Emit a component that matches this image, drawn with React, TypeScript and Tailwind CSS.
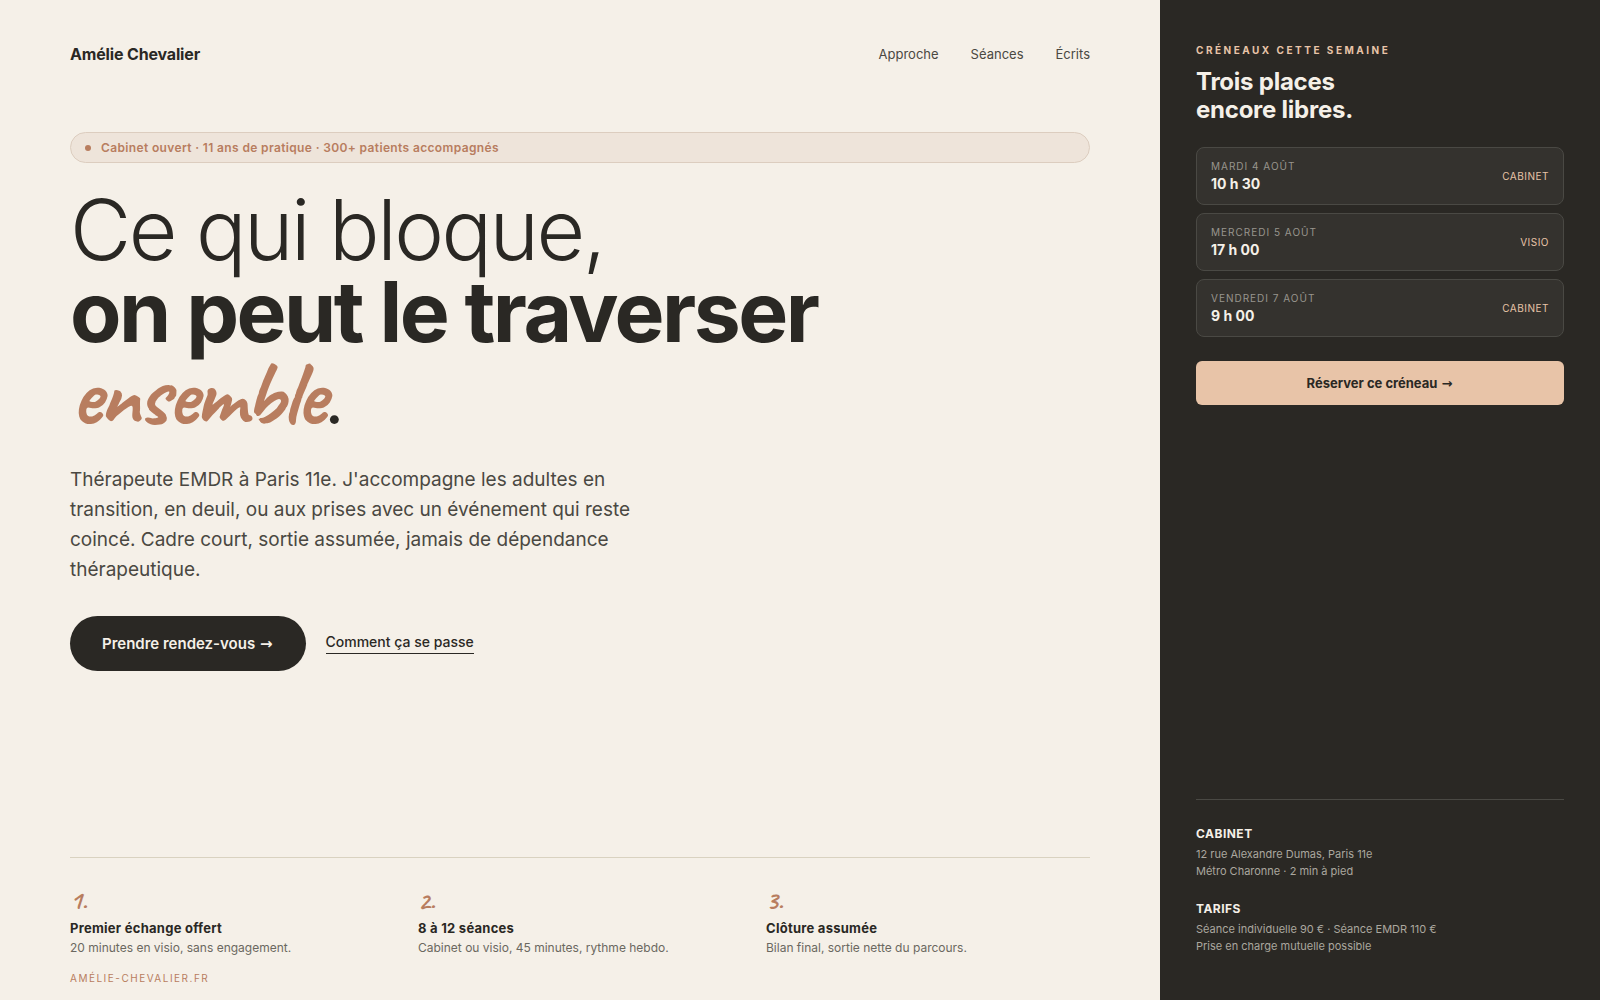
import clsx from 'clsx';

interface Slot {
  day: string;
  time: string;
  place: string;
}

interface Step {
  number: string;
  title: string;
  text: string;
}

const slots: Slot[] = [
  { day: 'Mardi 4 août', time: '10 h 30', place: 'Cabinet' },
  { day: 'Mercredi 5 août', time: '17 h 00', place: 'Visio' },
  { day: 'Vendredi 7 août', time: '9 h 00', place: 'Cabinet' },
];

const steps: Step[] = [
  { number: '1.', title: 'Premier échange offert', text: '20 minutes en visio, sans engagement.' },
  { number: '2.', title: '8 à 12 séances', text: 'Cabinet ou visio, 45 minutes, rythme hebdo.' },
  { number: '3.', title: 'Clôture assumée', text: 'Bilan final, sortie nette du parcours.' },
];

const infos = [
  { title: 'Cabinet', lines: ['12 rue Alexandre Dumas, Paris 11e', 'Métro Charonne · 2 min à pied'] },
  { title: 'Tarifs', lines: ['Séance individuelle 90 € · Séance EMDR 110 €', 'Prise en charge mutuelle possible'] },
];

// Handwritten accent used for the last word of the headline and the step numbers
const script = 'font-["Caveat","Lato",cursive] font-bold text-[#b87d5f]';

function Arrow() {
  return <span className="mx-px font-['DejaVu_Sans',sans-serif] leading-none">→</span>;
}

function Header() {
  return (
    <header className="flex items-center justify-between">
      <a href="#" className="text-base leading-5 font-bold tracking-[-0.01em]">
        Amélie Chevalier
      </a>
      <nav className="flex gap-8 text-[13px] leading-5 text-[#4a4842]">
        <a href="#approche">Approche</a>
        <a href="#seances">Séances</a>
        <a href="#ecrits">Écrits</a>
      </nav>
    </header>
  );
}

function Hero() {
  return (
    <section className="mt-[68px]">
      <div className="flex items-center gap-2.5 rounded-full border border-[#dccdbf] bg-[#eee4da] px-3.5 py-1.5 text-xs leading-[17px] font-semibold tracking-[0.03em] text-[#b87d5f]">
        <span className="size-1.5 rounded-full bg-[#b87d5f]" />
        Cabinet ouvert · 11 ans de pratique · 300+ patients accompagnés
      </div>

      <h1 className="mt-[26px] text-[84px] leading-[82px] font-light tracking-[-0.03em]">
        Ce qui bloque,
        <br />
        <strong className="font-bold">on peut le traverser</strong>
        <br />
        <em className={clsx(script, 'text-[91px] leading-[0] not-italic')}>ensemble</em>.
      </h1>

      <p className="mt-[30px] max-w-[580px] text-[19px] leading-[30px] text-[#4a4842]">
        Thérapeute EMDR à Paris 11e. J'accompagne les adultes en transition, en deuil, ou aux prises
        avec un événement qui reste coincé. Cadre court, sortie assumée, jamais de dépendance
        thérapeutique.
      </p>

      <div className="mt-[31px] flex items-center gap-5">
        <button
          type="button"
          className="rounded-full bg-[#2a2824] px-8 py-4 text-[15px] leading-[23px] font-semibold text-[#f5f0e8]"
        >
          Prendre rendez-vous <Arrow />
        </button>
        <a href="#seances" className="border-b border-[#2a2824] pb-0.5 text-sm leading-[18px] font-medium">
          Comment ça se passe
        </a>
      </div>
    </section>
  );
}

function Steps() {
  return (
    <section className="mt-auto border-t border-[#d9d2c0] pt-[30px]">
      <ol className="grid grid-cols-3 gap-6">
        {steps.map((step) => (
          <li key={step.number}>
            <div className={clsx(script, 'text-[26px] leading-[26px]')}>{step.number}</div>
            <h2 className="mt-1 text-[13px] leading-5 font-bold tracking-[0.02em]">{step.title}</h2>
            <p className="text-xs leading-5 text-[#6b6860]">{step.text}</p>
          </li>
        ))}
      </ol>
    </section>
  );
}

function SlotCard({ slot }: { slot: Slot }) {
  return (
    <li className="flex items-center justify-between rounded-lg border border-[#4a4944] bg-[#34322e] px-3.5 py-2.5">
      <div>
        <div className="text-[10px] leading-4 tracking-[0.1em] text-[#98958d] uppercase">{slot.day}</div>
        <div className="text-sm leading-5 font-bold">{slot.time}</div>
      </div>
      <span className="text-[10px] tracking-[0.05em] text-[#e8c4a8] uppercase">{slot.place}</span>
    </li>
  );
}

function Sidebar() {
  return (
    <aside className="flex w-[440px] shrink-0 flex-col bg-[#2a2824] px-9 pt-11 pb-[45px] text-[#f5f0e8]">
      <p className="text-[10px] leading-3 font-bold tracking-[0.25em] text-[#e8c4a8] uppercase">
        Créneaux cette semaine
      </p>
      <h2 className="mt-3 text-2xl leading-7 font-bold tracking-[-0.01em]">
        Trois places
        <br />
        encore libres.
      </h2>

      <ul className="mt-[23px] flex flex-col gap-2">
        {slots.map((slot) => (
          <SlotCard key={slot.day} slot={slot} />
        ))}
      </ul>

      <button
        type="button"
        className="mt-6 rounded-md bg-[#e8c4a8] py-3 text-[13px] leading-5 font-bold text-[#2a2824]"
      >
        Réserver ce créneau <Arrow />
      </button>

      <div className="mt-auto flex flex-col gap-[19px] border-t border-[#4a4944] pt-6">
        {infos.map((info) => (
          <div key={info.title}>
            <h3 className="mb-0.5 text-xs leading-5 font-bold tracking-[0.04em] uppercase">{info.title}</h3>
            {info.lines.map((line) => (
              <p key={line} className="text-[11px] leading-[17px] text-[#aaa79f]">
                {line}
              </p>
            ))}
          </div>
        ))}
      </div>
    </aside>
  );
}

export default function App() {
  return (
    <div className="flex min-h-screen bg-[#f5f0e8] font-['Inter',sans-serif] text-[#2a2824]">
      <main className="flex flex-1 flex-col px-[70px] pt-11 pb-3">
        <Header />
        <Hero />
        <Steps />
        <footer className="mt-2.5 text-[10px] leading-5 tracking-[0.15em] text-[#b87d5f] uppercase">
          amélie-chevalier.fr
        </footer>
      </main>
      <Sidebar />
    </div>
  );
}
